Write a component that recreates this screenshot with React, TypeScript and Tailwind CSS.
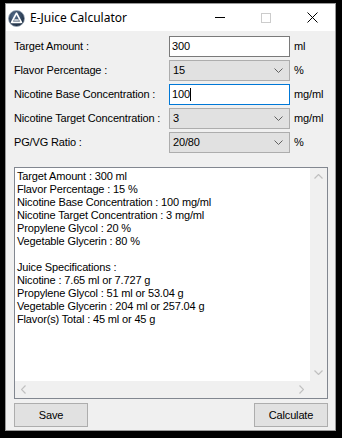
import React from "react";

const Chevron = () => (
  <svg width="9" height="5" viewBox="0 0 9 5" className="shrink-0">
    <polyline points="0.5,0.5 4.5,4.5 8.5,0.5" fill="none" stroke="#606060" strokeWidth="1" />
  </svg>
);

function Combo({ value }: { value: string }) {
  return (
    <div className="w-[121px] h-[21px] bg-[#e1e1e1] border border-[#adadad] flex items-center pl-[3px] pr-[6px] justify-between">
      <span>{value}</span>
      <Chevron />
    </div>
  );
}

function TextBox({ value, focused, caret }: { value: string; focused?: boolean; caret?: boolean }) {
  return (
    <div
      className={
        focused
          ? "w-[121px] h-[21px] bg-white border border-[#0078d7] flex items-center pl-[2px]"
          : "w-[121px] h-[21px] bg-white border border-[#7a7a7a] flex items-center pl-[2px]"
      }
    >
      <span>{value}</span>
      {caret && <span className="inline-block w-px h-[13px] bg-black" />}
    </div>
  );
}

function Row({ label, children, unit }: { label: string; children: React.ReactNode; unit: string }) {
  return (
    <div className="flex items-center h-[21px]">
      <div className="w-[155px]">{label}</div>
      {children}
      <div className="ml-[4px]">{unit}</div>
    </div>
  );
}

const lines = [
  "Target Amount : 300 ml",
  "Flavor Percentage : 15 %",
  "Nicotine Base Concentration : 100 mg/ml",
  "Nicotine Target Concentration : 3 mg/ml",
  "Propylene Glycol : 20 %",
  "Vegetable Glycerin : 80 %",
  "",
  "Juice Specifications :",
  "Nicotine : 7.65 ml or 7.727 g",
  "Propylene Glycol : 51 ml or 53.04 g",
  "Vegetable Glycerin : 204 ml or 257.04 g",
  "Flavor(s) Total : 45 ml or 45 g",
];

export default function App() {
  return (
    <div className="w-[342px] h-[438px] bg-black pt-[3px] pl-[5px] font-['Liberation_Sans',Arial,sans-serif] text-[11px] tracking-[-0.15px] text-black">
      <div className="w-[331px] h-[428px] border border-[#9a9a9a] bg-[#f0f0f0] flex flex-col">
        {/* Title bar */}
        <div className="h-[27px] bg-white flex items-center shrink-0 relative tracking-normal">
          <svg width="17" height="17" viewBox="0 0 17 17" className="ml-[2px] mt-[2px]">
            <defs>
              <radialGradient id="g" cx="0.4" cy="0.35" r="0.7">
                <stop offset="0" stopColor="#5a7391" />
                <stop offset="1" stopColor="#17263a" />
              </radialGradient>
            </defs>
            <circle cx="8.5" cy="8.5" r="8" fill="url(#g)" stroke="#9aa8b8" strokeWidth="0.8" />
            <path d="M8.5 3.2 L13.4 12.3 L3.6 12.3 Z" fill="none" stroke="#ffffff" strokeWidth="1.7" strokeLinejoin="round" />
            <path d="M6.2 10 L10.8 10" stroke="#ffffff" strokeWidth="1.3" />
          </svg>
          <span className="ml-[5px] text-[12px] font-['Noto_Sans','Open_Sans',sans-serif] mt-[1px]">E-Juice Calculator</span>
          <div className="ml-auto flex items-center h-full">
            <div className="w-[46px] h-full flex items-center justify-center">
              <div className="w-[10px] h-px bg-black" />
            </div>
            <div className="w-[46px] h-full flex items-center justify-center">
              <div className="w-[10px] h-[10px] border border-[#cccccc]" />
            </div>
            <div className="w-[46px] h-full flex items-center justify-center">
              <svg width="11" height="11" viewBox="0 0 11 11">
                <path d="M0.5 0.5 L10.5 10.5 M10.5 0.5 L0.5 10.5" stroke="#000" strokeWidth="1" />
              </svg>
            </div>
          </div>
        </div>

        {/* Client */}
        <div className="flex-1 flex flex-col pl-[8px] pt-[5px]">
          <div className="flex flex-col gap-[3px]">
            <Row label="Target Amount :" unit="ml">
              <TextBox value="300" />
            </Row>
            <Row label="Flavor Percentage :" unit="%">
              <Combo value="15" />
            </Row>
            <Row label="Nicotine Base Concentration :" unit="mg/ml">
              <TextBox value="100" focused caret />
            </Row>
            <Row label="Nicotine Target Concentration :" unit="mg/ml">
              <Combo value="3" />
            </Row>
            <Row label="PG/VG Ratio :" unit="%">
              <Combo value="20/80" />
            </Row>
          </div>

          {/* Output area */}
          <div className="mt-[14px] w-[314px] h-[232px] border border-[#828790] bg-white flex flex-col">
            <div className="flex flex-1 min-h-0">
              <div className="flex-1 pl-[2px] pt-[2px] leading-[13px] whitespace-pre">
                {lines.map((l, i) => (
                  <div key={i} className="h-[13px]">{l}</div>
                ))}
              </div>
              <div className="w-[17px] bg-[#f0f0f0] flex flex-col items-center justify-between py-[6px]">
                <svg width="9" height="5" viewBox="0 0 9 5">
                  <polyline points="0.5,4.5 4.5,0.5 8.5,4.5" fill="none" stroke="#c0c0c0" strokeWidth="1.2" />
                </svg>
                <svg width="9" height="5" viewBox="0 0 9 5">
                  <polyline points="0.5,0.5 4.5,4.5 8.5,0.5" fill="none" stroke="#c0c0c0" strokeWidth="1.2" />
                </svg>
              </div>
            </div>
            <div className="h-[17px] flex shrink-0">
              <div className="flex-1 bg-[#f0f0f0] flex items-center justify-between px-[6px]">
                <svg width="5" height="9" viewBox="0 0 5 9">
                  <polyline points="4.5,0.5 0.5,4.5 4.5,8.5" fill="none" stroke="#c0c0c0" strokeWidth="1.2" />
                </svg>
                <svg width="5" height="9" viewBox="0 0 5 9">
                  <polyline points="0.5,0.5 4.5,4.5 0.5,8.5" fill="none" stroke="#c0c0c0" strokeWidth="1.2" />
                </svg>
              </div>
              <div className="w-[17px] bg-[#f0f0f0]" />
            </div>
          </div>

          {/* Buttons */}
          <div className="mt-[4px] w-[314px] flex justify-between">
            <button className="w-[74px] h-[24px] bg-[#e1e1e1] border border-[#adadad] text-[11px]">Save</button>
            <button className="w-[74px] h-[24px] bg-[#e1e1e1] border border-[#adadad] text-[11px]">Calculate</button>
          </div>
        </div>
      </div>
    </div>
  );
}
